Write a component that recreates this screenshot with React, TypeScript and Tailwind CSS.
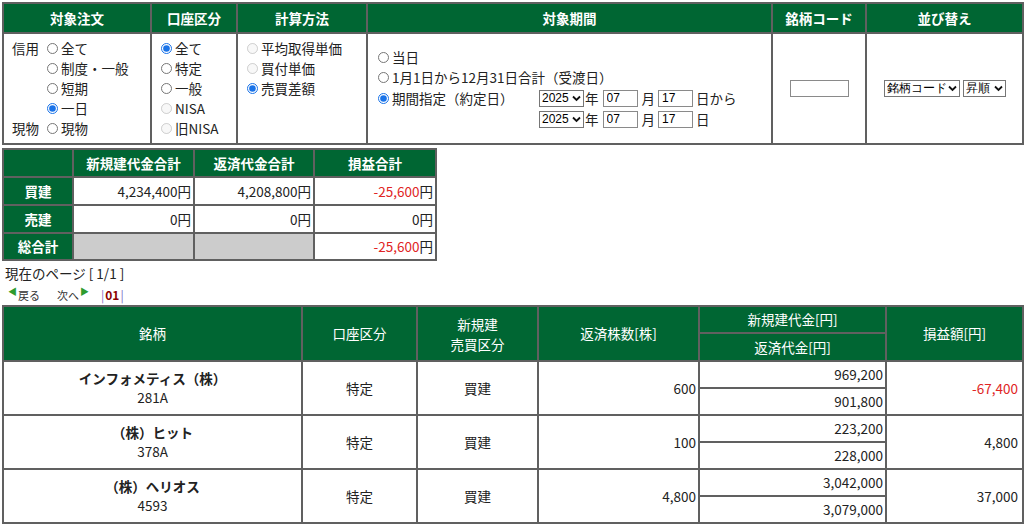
import React from 'react'

const th = 'bg-[#006633] text-white font-bold border-2 border-[#606060] text-center'
const td = 'bg-white border-2 border-[#606060]'
const red = 'text-[#e02424]'

function Radio({ checked, disabled }: { checked?: boolean; disabled?: boolean }) {
  return (
    <input
      type="radio"
      defaultChecked={checked}
      disabled={disabled}
      className="w-[11px] h-[11px] mr-[3px] shrink-0 accent-[#1a73e8]"
    />
  )
}

function Opt({ label, checked, disabled }: { label: string; checked?: boolean; disabled?: boolean }) {
  return (
    <label className="flex items-center h-[20px] whitespace-nowrap">
      <Radio checked={checked} disabled={disabled} />
      <span>{label}</span>
    </label>
  )
}

function Select({ value, w }: { value: string; w: string }) {
  return (
    <span className={`relative inline-flex ${w} h-[17px]`}>
      <select
        defaultValue={value}
        className="appearance-none w-full h-full border border-[#767676] bg-white pl-[2px] pr-[12px] text-[12px] leading-[15px] font-['Liberation_Sans',sans-serif] text-black"
      >
        <option>{value}</option>
      </select>
      <svg className="absolute right-[3px] top-[5px] pointer-events-none" width="9" height="7" viewBox="0 0 9 7">
        <path d="M1 1.5 L4.5 5 L8 1.5" fill="none" stroke="#111" strokeWidth="1.8" />
      </svg>
    </span>
  )
}

function TextInput({ value, w }: { value?: string; w: string }) {
  return (
    <input
      type="text"
      defaultValue={value}
      className={`${w} h-[17px] border border-[#8a8a8a] bg-white px-[3px] text-[12px] font-['Liberation_Sans',sans-serif] text-black`}
    />
  )
}

function FilterTable() {
  return (
    <table className="table-fixed border-collapse border-2 border-[#606060] w-[1020px] ml-[2px] mt-[2px]">
      <colgroup>
        <col className="w-[148px]" />
        <col className="w-[86px]" />
        <col className="w-[130px]" />
        <col className="w-[405px]" />
        <col className="w-[94px]" />
        <col className="w-[157px]" />
      </colgroup>
      <thead>
        <tr className="h-[30px]">
          <th className={th}>対象注文</th>
          <th className={th}>口座区分</th>
          <th className={th}>計算方法</th>
          <th className={th}>対象期間</th>
          <th className={th}>銘柄コード</th>
          <th className={th}>並び替え</th>
        </tr>
      </thead>
      <tbody>
        <tr className="h-[111px]">
          <td className={`${td} align-top pl-[8px] pt-[4px]`}>
            <div className="grid grid-cols-[35px_auto] grid-rows-[repeat(5,20px)]">
              <span className="flex items-center">信用</span>
              <Opt label="全て" />
              <span />
              <Opt label="制度・一般" />
              <span />
              <Opt label="短期" />
              <span />
              <Opt label="一日" checked />
              <span className="flex items-center">現物</span>
              <Opt label="現物" />
            </div>
          </td>
          <td className={`${td} align-top pl-[9px] pt-[4px]`}>
            <Opt label="全て" checked />
            <Opt label="特定" />
            <Opt label="一般" />
            <Opt label="NISA" disabled />
            <Opt label="旧NISA" disabled />
          </td>
          <td className={`${td} align-top pl-[9px] pt-[4px]`}>
            <Opt label="平均取得単価" disabled />
            <Opt label="買付単価" disabled />
            <Opt label="売買差額" checked />
          </td>
          <td className={`${td} align-middle pl-[10px]`}>
            <div className="flex flex-col">
              <Opt label="当日" />
              <Opt label="1月1日から12月31日合計（受渡日）" />
              <div className="flex items-center h-[21px]">
                <label className="flex items-center w-[161px] whitespace-nowrap">
                  <Radio checked />
                  <span>期間指定（約定日）</span>
                </label>
                <Select value="2025" w="w-[45px]" />
                <span className="ml-[1px]">年</span>
                <span className="ml-[4px] flex"><TextInput value="07" w="w-[35px]" /></span>
                <span className="ml-[4px]">月</span>
                <span className="ml-[3px] flex"><TextInput value="17" w="w-[35px]" /></span>
                <span className="ml-[3px]">日から</span>
              </div>
              <div className="flex items-center h-[21px] pl-[161px]">
                <Select value="2025" w="w-[45px]" />
                <span className="ml-[1px]">年</span>
                <span className="ml-[4px] flex"><TextInput value="07" w="w-[35px]" /></span>
                <span className="ml-[4px]">月</span>
                <span className="ml-[3px] flex"><TextInput value="17" w="w-[35px]" /></span>
                <span className="ml-[3px]">日</span>
              </div>
            </div>
          </td>
          <td className={`${td} align-middle text-center`}>
            <div className="flex justify-center">
              <TextInput w="w-[59px]" />
            </div>
          </td>
          <td className={`${td} align-middle`}>
            <div className="flex justify-center gap-[3px]">
              <Select value="銘柄コード" w="w-[76px]" />
              <Select value="昇順" w="w-[43px]" />
            </div>
          </td>
        </tr>
      </tbody>
    </table>
  )
}

function SummaryTable() {
  const rows = [
    { label: '買建', a: '4,234,400円', b: '4,208,800円', c: '-25,600', neg: true },
    { label: '売建', a: '0円', b: '0円', c: '0', neg: false },
  ]
  return (
    <table className="table-fixed border-collapse border-2 border-[#606060] w-[433px] ml-[2px] mt-[3px]">
      <colgroup>
        <col className="w-[70px]" />
        <col className="w-[121px]" />
        <col className="w-[120px]" />
        <col className="w-[122px]" />
      </colgroup>
      <thead>
        <tr className="h-[28px]">
          <th className={th}></th>
          <th className={th}>新規建代金合計</th>
          <th className={th}>返済代金合計</th>
          <th className={th}>損益合計</th>
        </tr>
      </thead>
      <tbody>
        {rows.map((r) => (
          <tr key={r.label} className="h-[28px]">
            <th className={th}>{r.label}</th>
            <td className={`${td} text-right pr-[2px]`}>{r.a}</td>
            <td className={`${td} text-right pr-[2px]`}>{r.b}</td>
            <td className={`${td} text-right pr-[2px]`}>
              {r.neg ? <span className={red}>{r.c}</span> : r.c}円
            </td>
          </tr>
        ))}
        <tr className="h-[27px]">
          <th className={th}>総合計</th>
          <td className="bg-[#cccccc] border-2 border-[#606060]"></td>
          <td className="bg-[#cccccc] border-2 border-[#606060]"></td>
          <td className={`${td} text-right pr-[2px]`}>
            <span className={red}>-25,600</span>円
          </td>
        </tr>
      </tbody>
    </table>
  )
}

function Pager() {
  return (
    <div className="pl-[5px]">
      <div className="h-[22px] pt-[4px] leading-[16px]">現在のページ [ 1/1 ]</div>
      <div className="flex items-end h-[19px] text-[11px] text-[#333] leading-[14px]">
        <span className="flex items-start pl-[3px]">
          <span className="text-[#2e9b2e] text-[9px] leading-[10px] mr-[1px]">◀</span>
          <span className="mt-[1px]">戻る</span>
        </span>
        <span className="flex items-start ml-[17px]">
          <span className="mt-[1px]">次へ</span>
          <span className="text-[#2e9b2e] text-[9px] leading-[10px] ml-[1px]">▶</span>
        </span>
        <span className="ml-[12px] text-[12px]">
          <span className="text-[#7b6fc4]">|</span>
          <span className="text-[#8b0000] font-bold px-[1px]">01</span>
          <span className="text-[#7b6fc4]">|</span>
        </span>
      </div>
    </div>
  )
}

const positions = [
  { name: 'インフォメティス（株）', code: '281A', qty: '600', open: '969,200', close: '901,800', pl: '-67,400', neg: true },
  { name: '（株）ヒット', code: '378A', qty: '100', open: '223,200', close: '228,000', pl: '4,800', neg: false },
  { name: '（株）ヘリオス', code: '4593', qty: '4,800', open: '3,042,000', close: '3,079,000', pl: '37,000', neg: false },
]

function PositionTable() {
  return (
    <table className="table-fixed border-collapse border-2 border-[#606060] w-[1020px] ml-[2px] mt-[3px]">
      <colgroup>
        <col className="w-[299px]" />
        <col className="w-[115px]" />
        <col className="w-[121px]" />
        <col className="w-[161px]" />
        <col className="w-[187px]" />
        <col className="w-[137px]" />
      </colgroup>
      <thead>
        <tr className="h-[27px]">
          <th rowSpan={2} className={`${th} font-normal`}>銘柄</th>
          <th rowSpan={2} className={`${th} font-normal`}>口座区分</th>
          <th rowSpan={2} className={`${th} font-normal leading-[20px]`}>
            新規建<br />売買区分
          </th>
          <th rowSpan={2} className={`${th} font-normal`}>返済株数[株]</th>
          <th className={`${th} font-normal`}>新規建代金[円]</th>
          <th rowSpan={2} className={`${th} font-normal`}>損益額[円]</th>
        </tr>
        <tr className="h-[28px]">
          <th className={`${th} font-normal`}>返済代金[円]</th>
        </tr>
      </thead>
      <tbody>
        {positions.map((p) => (
          <React.Fragment key={p.code}>
            <tr className="h-[27px]">
              <td rowSpan={2} className={`${td} text-center leading-[19px]`}>
                <div className="font-bold">{p.name}</div>
                <div>{p.code}</div>
              </td>
              <td rowSpan={2} className={`${td} text-center`}>特定</td>
              <td rowSpan={2} className={`${td} text-center`}>買建</td>
              <td rowSpan={2} className={`${td} text-right pr-[2px]`}>{p.qty}</td>
              <td className={`${td} text-right pr-[2px]`}>{p.open}</td>
              <td rowSpan={2} className={`${td} text-right pr-[4px] ${p.neg ? red : ''}`}>{p.pl}</td>
            </tr>
            <tr className="h-[27px]">
              <td className={`${td} text-right pr-[2px]`}>{p.close}</td>
            </tr>
          </React.Fragment>
        ))}
      </tbody>
    </table>
  )
}

export default function App() {
  return (
    <div className="w-[1024px] h-[527px] overflow-hidden bg-white text-[13.5px] text-[#222] font-['Noto_Sans_CJK_JP','Noto_Sans',sans-serif]">
      <FilterTable />
      <SummaryTable />
      <Pager />
      <PositionTable />
    </div>
  )
}
